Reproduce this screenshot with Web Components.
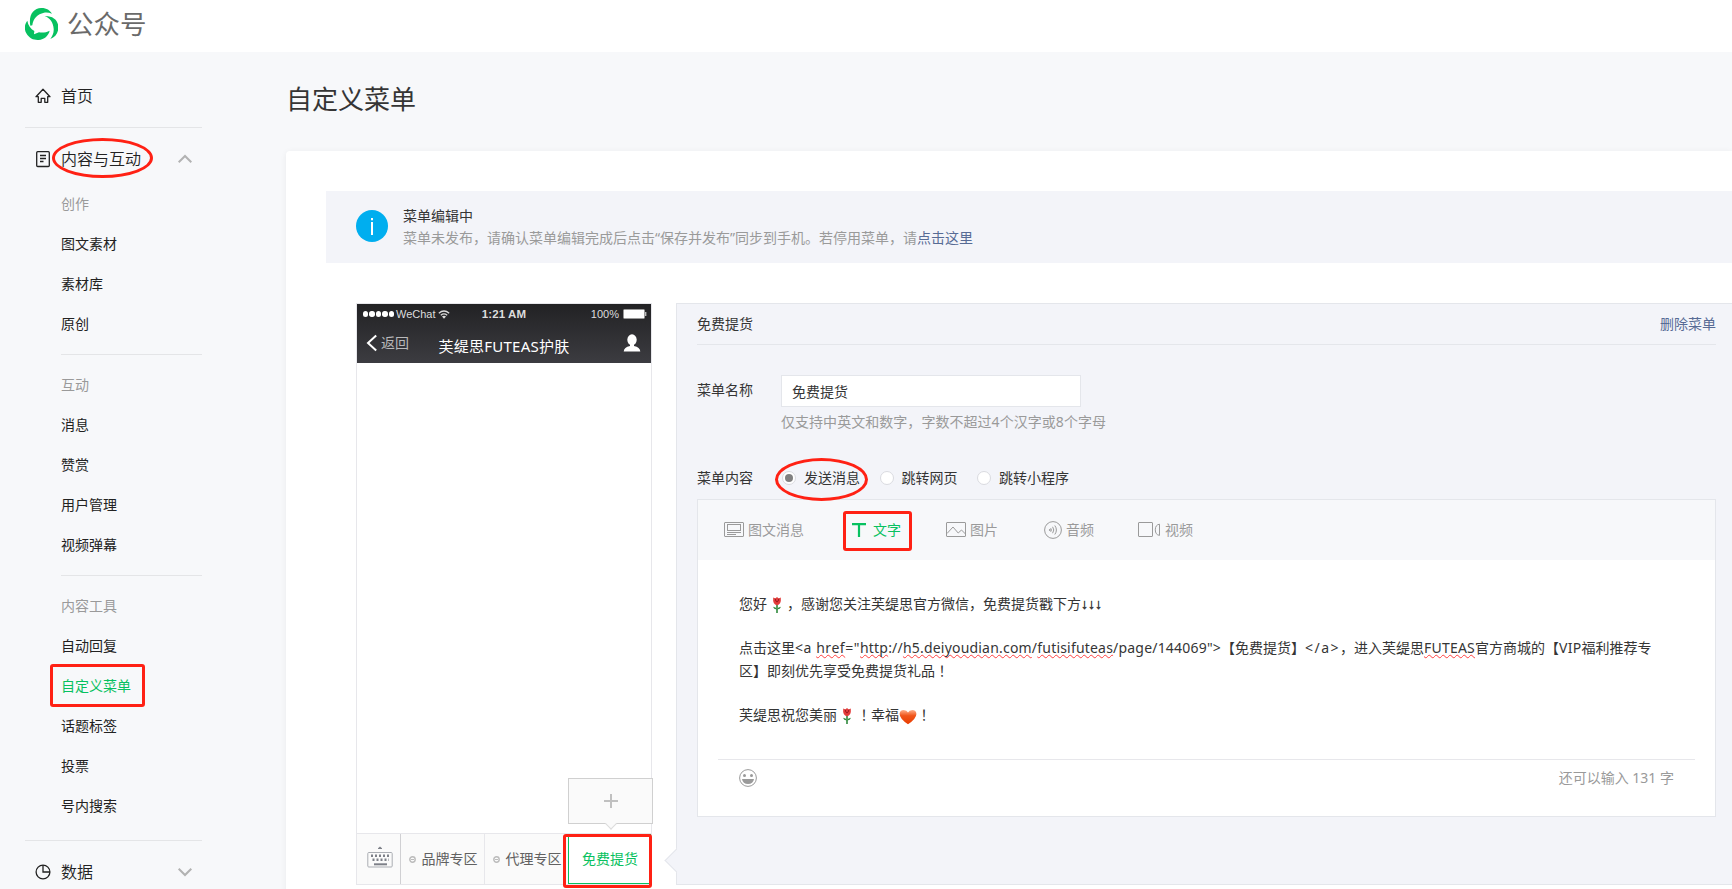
<!DOCTYPE html>
<html lang="zh-CN">
<head>
<meta charset="utf-8">
<title>公众号</title>
<style>
  html, body { height: 100%; }
  body {
    margin: 0;
    overflow: hidden;
    background: #f7f8fa;
    color: #353535;
    font: 14px/22px "Noto Sans", "Noto Sans CJK SC", sans-serif;
  }
</style>
</head>
<body>
<mp-app></mp-app>

<script>
// Small helper: every element clones its template into an open shadow root
function define(name, html, setup) {
  const template = document.createElement("template");
  template.innerHTML = html;
  customElements.define(name, class extends HTMLElement {
    constructor() {
      super();
      const shadow = this.attachShadow({ mode: "open" });
      shadow.append(template.content.cloneNode(true));
    }
    connectedCallback() {
      if (setup) setup(this, this.shadowRoot);
    }
  });
}

const icons = {
  logo: [33, 33, `<g transform="translate(-25 -8) scale(.3333)" fill="#07c160">
    <path d="M91 77C85 46 100 24 124 24C140 24 150 31 156 41C149 38 140 37 132 38C113 42 99 55 97 76Z"/>
    <path d="M134 48C160 47 175 62 175 82C175 99 166 111 151 117C158 108 162 98 161 86C160 68 150 54 134 48Z"/>
    <path d="M82 62C72 74 73 90 79 100C88 116 102 121 116 120C133 118 145 108 149 92C140 97 128 99 117 97L102 103L103 93C92 86 84 76 82 62Z"/></g>`],
  home: [16, 16, `<path d="M1 8.7L8 1.2L15 8.7H12.7V14.3H9.8V10.3H6.2V14.3H3.3V8.7Z" fill="none" stroke="#222" stroke-width="1.3" stroke-linejoin="round"/>`],
  doc: [16, 18, `<rect x="1.7" y="1.7" width="12.6" height="14.8" rx="1" fill="none" stroke="#222" stroke-width="1.3"/><path d="M5 5.5H11M5 8.5H11M5 11.5H8.5" stroke="#222" stroke-width="1.3"/>`],
  pie: [16, 16, `<circle cx="8" cy="8" r="6.9" fill="none" stroke="#222" stroke-width="1.3"/><path d="M8 1V8H15" fill="none" stroke="#222" stroke-width="1.3"/>`],
  up: [14, 10, `<path d="M.7 8.3L7 2L13.3 8.3" fill="none" stroke="#b2b2b2" stroke-width="2"/>`],
  down: [14, 10, `<path d="M.7 1.7L7 8L13.3 1.7" fill="none" stroke="#b2b2b2" stroke-width="2"/>`],
  info: [32, 32, `<circle cx="16" cy="16" r="16" fill="#00aeef"/><path d="M15 8h2v2.2h-2zM15 12h2v13h-2z" fill="#fff"/>`],
  wifi: [12, 9, `<g fill="none" stroke="#ddd" stroke-width="1.3"><path d="M.8 3.2Q6 -1.2 11.2 3.2M2.8 5.2Q6 2.6 9.2 5.2"/></g><path d="M4 6.4Q6 5 8 6.4L6 8.8Z" fill="#ddd"/>`],
  battery: [24, 10, `<rect x=".5" y=".5" width="21" height="9" rx="1" fill="#fff" stroke="#999"/><rect x="22" y="3" width="1.4" height="4" fill="#bbb"/>`],
  back: [12, 18, `<path d="M10.2 1.4L2 9L10.2 16.6" fill="none" stroke="#fff" stroke-width="2"/>`],
  person: [18, 18, `<ellipse cx="9" cy="5.8" rx="4.7" ry="5.5" fill="#fff"/><path d="M7 9H11V12Q17 13.2 17.3 17.5H.7Q1 13.2 7 12Z" fill="#fff"/>`],
  keyboard: [26, 22, `<path d="M11 2.3L13 .6L15 2.3V3H11Z" fill="#7d8088"/><rect x=".8" y="6.5" width="24.4" height="14.5" rx="1" fill="none" stroke="#aaadb3"/>
    <g stroke="#7d8088" stroke-width="2"><path d="M4 9.8H23" stroke-width="2.5" stroke-dasharray="2 2"/><path d="M5.5 13.8H22" stroke-width="2.5" stroke-dasharray="2 2"/><path d="M7 18.3H20"/></g>`],
  ring: [7, 7, `<circle cx="3.5" cy="3.5" r="2.7" fill="none" stroke="#bbb" stroke-width="1.4"/><path d="M2 3.5H5" stroke="#bbb"/>`],
  plus: [14, 14, `<path d="M7 0V14M0 7H14" stroke="#c0c0c0" stroke-width="2"/>`],
  news: [20, 16, `<g fill="none" stroke="#9a9a9a"><rect x=".5" y=".5" width="19" height="14" rx=".5"/><rect x="3.5" y="2.5" width="13" height="6"/><path d="M3 10.5H17M3 12.5H12"/></g>`],
  text: [14, 14, `<path d="M0 1.2H14M7 1V14" stroke="#07c160" stroke-width="2.2" fill="none"/>`],
  picture: [20, 16, `<g fill="none" stroke="#9a9a9a"><rect x=".5" y=".5" width="19" height="14" rx=".5"/><path d="M1 11.5L7 5L12.2 11L15.5 8L19.5 12"/></g>`],
  audio: [18, 18, `<g fill="none" stroke="#9a9a9a"><circle cx="9" cy="9" r="8.4"/><path d="M6.7 7.2Q8.1 9 6.7 10.8M8.6 5.8Q11 9 8.6 12.2M10.8 4.5Q14 9 10.8 13.5"/></g><circle cx="5.8" cy="9" r=".9" fill="#9a9a9a"/>`],
  video: [23, 16, `<g fill="none" stroke="#9a9a9a"><rect x=".5" y=".5" width="14" height="14" rx=".5"/><path d="M21.5 2.2V13.4Q17.3 12.8 17.3 7.8Q17.3 2.8 21.5 2.2Z"/></g>`],
  smile: [18, 18, `<circle cx="9" cy="9" r="8.4" fill="none" stroke="#9a9a9a"/><circle cx="5.5" cy="6.4" r="1.5" fill="#9a9a9a"/><circle cx="12.5" cy="6.4" r="1.5" fill="#9a9a9a"/><path d="M3 10H15Q14.2 15 9 15Q3.8 15 3 10Z" fill="#9a9a9a"/>`],
  rose: [20, 18, `<path d="M10 9V17" stroke="#2f8a3c" stroke-width="1.6"/><path d="M10 13.4Q6.8 13.6 6 10.8Q9 10.8 10 13.4Q11 10.8 14 10.8Q13.2 13.6 10 13.4Z" fill="#2f8a3c"/><path d="M6.2 1.5L8.4 2.4L10 1L11.7 2.4L13.8 1.5Q14.5 8.6 10 9.3Q5.5 8.6 6.2 1.5Z" fill="#e33c3a"/><path d="M8.3 2.6Q8.6 6 10 6Q11.4 6 11.8 2.6" fill="none" stroke="#9c1820"/>`],
  heart: [18, 16, `<defs><linearGradient id="g" x2="0" y2="1"><stop offset="0" stop-color="#ffb08c"/><stop offset=".4" stop-color="#f0551a"/><stop offset="1" stop-color="#e83c00"/></linearGradient></defs><path d="M9 15.3Q.6 9.6.6 5Q.8 1 4.7 1Q7.8 1 9 3.6Q10.2 1 13.3 1Q17.2 1 17.4 5Q17.4 9.6 9 15.3Z" fill="url(#g)"/>`]
};

define("mp-icon", `
  <style>
    :host { display: inline-flex; flex: none; }
    svg { display: block; }
  </style>`, (el, root) => {
  const [w, h, body] = icons[el.getAttribute("name")];
  root.innerHTML += `<svg width="${w}" height="${h}" viewBox="0 0 ${w} ${h}">${body}</svg>`;
});

// Run of text spaced out (or tightened) to an exact width
define("fit-run", `
  <style>
    :host { display: inline-block; white-space: nowrap; }
  </style>
  <slot></slot>`, el => {
  const want = Number(el.getAttribute("width"));
  const gap = (want - el.getBoundingClientRect().width) / el.textContent.length;
  el.style.letterSpacing = gap + "px";
  el.style.width = want + "px";
});

// Red marker, laid over the page
define("red-mark", `
  <style>
    :host {
      position: absolute;
      box-sizing: border-box;
      border: 3px solid #ff2114;
      border-radius: 3px;
      pointer-events: none;
    }
    :host([round]) { border-radius: 50%; }
  </style>`, el => {
  const [x, y, w, h] = el.getAttribute("box").split(" ");
  el.style.cssText = `left:${x}px;top:${y}px;width:${w}px;height:${h}px`;
});

define("mp-header", `
  <style>
    :host {
      display: flex;
      align-items: center;
      gap: 9px;
      box-sizing: border-box;
      height: 52px;
      padding: 0 0 4px 25px;
      background: #fff;
      color: #6a6a6a;
      font-size: 26.5px;
      line-height: 32px;
    }
  </style>
  <mp-icon name="logo"></mp-icon>
  <slot></slot>`);

// First level entry of the side menu
define("nav-group", `
  <style>
    :host {
      display: flex;
      align-items: center;
      height: 40px;
      padding: 0 10px;
      font-size: 16px;
      font-weight: 350;
      color: #222;
    }
    .label { flex: 1; padding-left: 10px; }
  </style>
  <slot name="icon"></slot>
  <span class="label"><slot></slot></span>
  <slot name="arrow"></slot>`);

define("nav-item", `
  <style>
    :host { display: block; padding-left: 36px; line-height: 40px; color: #222; }
    :host([caption]) { color: #9a9a9a; }
    :host([active]) { color: #07c160; }
  </style>
  <slot></slot>`);

define("nav-line", `
  <style>
    :host { display: block; height: 1px; margin: 11px 0; background: #e4e5e7; }
    :host([inner]) { margin: 10px 0 10px 36px; }
    :host([last]) { margin-top: 14px; }
  </style>`);

define("mp-sidebar", `
  <style>
    :host { display: block; width: 177px; padding: 24px 0 0 25px; flex: none; }
    .list { padding-top: 5px; }
  </style>
  <nav-group><mp-icon slot="icon" name="home"></mp-icon>首页</nav-group>
  <nav-line></nav-line>
  <nav-group><mp-icon slot="icon" name="doc"></mp-icon>内容与互动<mp-icon slot="arrow" name="up"></mp-icon></nav-group>
  <div class="list">
    <nav-item caption>创作</nav-item>
    <nav-item>图文素材</nav-item>
    <nav-item>素材库</nav-item>
    <nav-item>原创</nav-item>
    <nav-line inner></nav-line>
    <nav-item caption>互动</nav-item>
    <nav-item>消息</nav-item>
    <nav-item>赞赏</nav-item>
    <nav-item>用户管理</nav-item>
    <nav-item>视频弹幕</nav-item>
    <nav-line inner></nav-line>
    <nav-item caption>内容工具</nav-item>
    <nav-item>自动回复</nav-item>
    <nav-item active>自定义菜单</nav-item>
    <nav-item>话题标签</nav-item>
    <nav-item>投票</nav-item>
    <nav-item>号内搜索</nav-item>
  </div>
  <nav-line last></nav-line>
  <nav-group><mp-icon slot="icon" name="pie"></mp-icon>数据<mp-icon slot="arrow" name="down"></mp-icon></nav-group>`);

define("mp-notice", `
  <style>
    :host {
      display: flex;
      align-items: flex-start;
      gap: 15px;
      box-sizing: border-box;
      height: 72px;
      padding: 14px 30px;
      background: #f3f4f9;
    }
    mp-icon { margin-top: 5px; }
    .desc { color: #9a9a9a; white-space: nowrap; }
    a { color: #576b95; }
  </style>
  <mp-icon name="info"></mp-icon>
  <div>
    <div>菜单编辑中</div>
    <div class="desc"><fit-run width="514">菜单未发布，请确认菜单编辑完成后点击“保存并发布”同步到手机。若停用菜单，请</fit-run><a>点击这里</a></div>
  </div>`);

define("phone-menu", `
  <style>
    :host {
      display: flex;
      align-items: center;
      justify-content: center;
      gap: 6px;
      flex: 1;
      box-sizing: border-box;
      border-left: 1px solid #e7e7eb;
      padding-left: 1px;
      color: #616161;
      white-space: nowrap;
    }
    :host([active]) { flex: 0 0 83px; border: 1px solid #07c160; background: #fff; color: #07c160; }
  </style>
  <slot></slot>`);

define("phone-preview", `
  <style>
    :host {
      position: relative;
      display: flex;
      flex-direction: column;
      flex: none;
      box-sizing: border-box;
      width: 296px;
      height: 582px;
      border: 1px solid #e7e7eb;
      background: #fff;
    }
    header {
      height: 59px;
      color: #ddd;
      background: linear-gradient(#222224, #3c3c41);
      font-family: "Liberation Sans", "Noto Sans CJK SC", sans-serif;
    }
    .status, .title { display: grid; grid-template-columns: 1fr auto 1fr; align-items: center; }
    .status { height: 20px; padding: 0 4px 0 6px; font-size: 11px; line-height: 20px; }
    .status > *, .title > * { display: flex; align-items: center; }
    .dots { display: flex; gap: 1px; margin-right: 2px; }
    .dots i { width: 5.4px; height: 5.4px; border-radius: 50%; background: #fff; }
    .left mp-icon { margin-left: 2px; }
    .right { justify-content: flex-end; gap: 4px; }
    .clock { padding-right: 2px; font-size: 11.5px; font-weight: bold; letter-spacing: .1px; }
    .title { height: 38px; padding: 0 9px; }
    .title .right { margin-right: 1px; }
    .back { gap: 3px; color: #b9b9bb; }
    .name { color: #fff; font: 15px/22px "Noto Sans", "Noto Sans CJK SC", sans-serif; padding-top: 6px; }
    .screen { flex: 1; }
    .bar { display: flex; height: 50px; border-top: 1px solid #e7e7eb; background: #fafafa; }
    .keys { display: flex; align-items: center; justify-content: center; width: 43px; border-right: 1px solid #d0d0d3; }
    .keys mp-icon { margin: -4px 0 0 2px; }
    .bar phone-menu:nth-child(2) { border-left: 0; }
    .pop {
      position: absolute;
      left: 211px;
      top: 474px;
      display: flex;
      align-items: center;
      justify-content: center;
      box-sizing: border-box;
      width: 85px;
      height: 46px;
      border: 1px solid #d0d0d0;
      background: #fafafa;
    }
    .pop::after {
      content: "";
      position: absolute;
      left: 38px;
      bottom: -5px;
      width: 7px;
      height: 7px;
      border: solid #dcdcdc;
      border-width: 0 1px 1px 0;
      background: #fafafa;
      transform: rotate(45deg);
    }
  </style>
  <header>
    <div class="status">
      <span class="left"><span class="dots"><i></i><i></i><i></i><i></i><i></i></span>WeChat<mp-icon name="wifi"></mp-icon></span>
      <span class="clock">1:21 AM</span>
      <span class="right">100%<mp-icon name="battery"></mp-icon></span>
    </div>
    <div class="title">
      <span class="back"><mp-icon name="back"></mp-icon>返回</span>
      <span class="name"><fit-run width="131">芙缇思FUTEAS护肤</fit-run></span>
      <span class="right"><mp-icon name="person"></mp-icon></span>
    </div>
  </header>
  <div class="screen"></div>
  <div class="bar">
    <div class="keys"><mp-icon name="keyboard"></mp-icon></div>
    <phone-menu><mp-icon name="ring"></mp-icon>品牌专区</phone-menu>
    <phone-menu><mp-icon name="ring"></mp-icon>代理专区</phone-menu>
    <phone-menu active>免费提货</phone-menu>
  </div>
  <div class="pop"><mp-icon name="plus"></mp-icon></div>`);

define("form-row", `
  <style>
    :host { display: grid; grid-template-columns: 84px 1fr; }
    .label { line-height: 32px; }
  </style>
  <span class="label"><slot name="label"></slot></span>
  <div><slot></slot></div>`);

define("radio-option", `
  <style>
    :host { display: inline-flex; align-items: center; gap: 8px; margin-right: 19.5px; }
    i {
      display: flex;
      box-sizing: border-box;
      width: 14px;
      height: 14px;
      padding: 2px;
      border: 1px solid #dadbe0;
      border-radius: 50%;
      background: #fff;
    }
    :host([checked]) i::after { content: ""; flex: 1; border-radius: 50%; background: #808080; }
  </style>
  <i></i><slot></slot>`);

define("editor-tab", `
  <style>
    :host { display: inline-flex; align-items: center; gap: 4px; color: #9a9a9a; }
    :host([active]) { color: #07c160; gap: 7px; }
  </style>
  <slot></slot>`);

define("message-editor", `
  <style>
    :host {
      display: flex;
      flex-direction: column;
      box-sizing: border-box;
      width: 1019px;
      height: 318px;
      border: 1px solid #e4e6eb;
      background: #fff;
    }
    .tabs { display: flex; gap: 45px; height: 60px; padding-left: 26px; background: #f7f8fa; }
    .tabs editor-tab:nth-child(1) { margin-right: 3px; }
    .tabs editor-tab:nth-child(4) { margin-left: 1px; }
    .tabs editor-tab:nth-child(5) { margin-left: -1px; }
    .text { flex: 1; padding: 33px 41px 0; white-space: nowrap; }
    p { margin: 0; height: 22px; }
    u { text-decoration: underline wavy #ff4040 .8px; text-underline-offset: 1px; text-decoration-skip-ink: none; }
    mp-icon { vertical-align: -5px; }
    .arrows { font-family: "Liberation Sans"; -webkit-text-stroke: .4px; }
    /* full-width marks sit in the middle of their cell */
    .mark { font-family: "Noto Sans CJK TC"; }
    footer {
      display: flex;
      justify-content: space-between;
      height: 57px;
      margin: 0 20px;
      padding: 0 21px;
      box-sizing: border-box;
      border-top: 1px solid #e7e7eb;
      color: #9a9a9a;
    }
    footer mp-icon { margin-top: 9px; }
    footer span { margin-top: 7px; }
  </style>
  <div class="tabs">
    <editor-tab><mp-icon name="news"></mp-icon>图文消息</editor-tab>
    <editor-tab active><mp-icon name="text"></mp-icon>文字</editor-tab>
    <editor-tab><mp-icon name="picture"></mp-icon>图片</editor-tab>
    <editor-tab><mp-icon name="audio"></mp-icon>音频</editor-tab>
    <editor-tab><mp-icon name="video"></mp-icon>视频</editor-tab>
  </div>
  <div class="text">
    <p>您好<mp-icon name="rose"></mp-icon>，感谢您关注芙缇思官方微信，免费提货戳下方<span class="arrows">↓↓↓</span></p>
    <p></p>
    <p>点击这里<fit-run width="65">&lt;a <u>href</u>="</fit-run><fit-run width="361"><u>http</u>://<u>h5.deiyoudian.com</u>/<u>futisifuteas</u>/page/144069"&gt;</fit-run>【免费提货】<fit-run width="35">&lt;/a&gt;</fit-run>，进入芙缇思<fit-run width="51"><u>FUTEAS</u></fit-run>官方商城的【<fit-run width="22.5">VIP</fit-run>福利推荐专</p>
    <p>区】即刻优先享受免费提货礼品<span class="mark" lang="zh-TW">！</span></p>
    <p></p>
    <p>芙缇思祝您美丽<mp-icon name="rose"></mp-icon><span class="mark" lang="zh-TW">！</span>幸福<mp-icon name="heart"></mp-icon><span class="mark" lang="zh-TW">！</span></p>
  </div>
  <footer><mp-icon name="smile"></mp-icon><span>还可以输入 131 字</span></footer>`);

define("menu-form", `
  <style>
    :host {
      position: relative;
      display: block;
      flex: none;
      box-sizing: border-box;
      width: 1061px;
      height: 582px;
      padding: 0 20px;
      border: 1px solid #e4e6eb;
      background: #f3f4f9;
    }
    /* pointer towards the phone */
    :host::before {
      content: "";
      position: absolute;
      left: -9px;
      top: 548px;
      width: 16px;
      height: 16px;
      border: solid #e4e6eb;
      border-width: 0 0 1px 1px;
      background: #f3f4f9;
      transform: rotate(45deg);
    }
    .head { display: flex; justify-content: space-between; width: 1019px; height: 40px; line-height: 40px; border-bottom: 1px solid #e4e6eb; }
    a { color: #576b95; }
    .name { margin-top: 29px; }
    input {
      display: block;
      box-sizing: border-box;
      width: 300px;
      height: 32px;
      margin: 1px 0 0;
      padding: 0 10px;
      border: 1px solid #e4e6eb;
      border-radius: 0;
      background: #fff;
      color: inherit;
      font: inherit;
    }
    .hint { margin-top: 4px; color: #9a9a9a; }
    .kind { margin-top: 29px; height: 37px; }
    .options { display: flex; height: 32px; padding-left: 1px; }
  </style>
  <div class="head"><span>免费提货</span><a>删除菜单</a></div>
  <form-row class="name">
    <span slot="label">菜单名称</span>
    <input value="免费提货">
    <div class="hint"><fit-run width="325">仅支持中英文和数字，字数不超过4个汉字或8个字母</fit-run></div>
  </form-row>
  <form-row class="kind">
    <span slot="label">菜单内容</span>
    <div class="options">
      <radio-option checked>发送消息</radio-option>
      <radio-option>跳转网页</radio-option>
      <radio-option>跳转小程序</radio-option>
    </div>
  </form-row>
  <message-editor></message-editor>`);

define("mp-app", `
  <style>
    :host { position: relative; display: block; height: 889px; overflow: hidden; }
    .page { display: flex; gap: 84px; }
    main { flex: 1; min-width: 0; }
    h1 { margin: 0; height: 99px; font: 26px/92px "Noto Sans CJK SC", sans-serif; color: #353535; }
    .card {
      height: 760px;
      padding: 40px 0 0 40px;
      border-radius: 4px 0 0 0;
      background: #fff;
      box-shadow: 0 1px 6px rgba(0, 0, 0, .06);
    }
    .work { display: flex; gap: 24px; padding: 40px 0 0 30px; }
  </style>
  <mp-header>公众号</mp-header>
  <div class="page">
    <mp-sidebar></mp-sidebar>
    <main>
      <h1>自定义菜单</h1>
      <div class="card">
        <mp-notice></mp-notice>
        <div class="work">
          <phone-preview></phone-preview>
          <menu-form></menu-form>
        </div>
      </div>
    </main>
  </div>
  <red-mark round box="52 138 101 40"></red-mark>
  <red-mark box="50 664 95 43"></red-mark>
  <red-mark round box="775 458 93 43"></red-mark>
  <red-mark box="843 511 69 40"></red-mark>
  <red-mark box="563 834 89 54"></red-mark>`);
</script>
</body>
</html>
